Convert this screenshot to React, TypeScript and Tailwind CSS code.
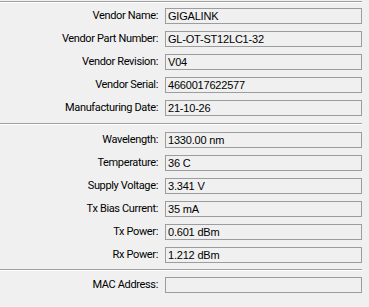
import React from "react";

const group1: [string, string][] = [
  ["Vendor Name:", "GIGALINK"],
  ["Vendor Part Number:", "GL-OT-ST12LC1-32"],
  ["Vendor Revision:", "V04"],
  ["Vendor Serial:", "4660017622577"],
  ["Manufacturing Date:", "21-10-26"],
];

const group2: [string, string][] = [
  ["Wavelength:", "1330.00 nm"],
  ["Temperature:", "36 C"],
  ["Supply Voltage:", "3.341 V"],
  ["Tx Bias Current:", "35 mA"],
  ["Tx Power:", "0.601 dBm"],
  ["Rx Power:", "1.212 dBm"],
];

function Row({ label, value }: { label: string; value: string }) {
  return (
    <div className="flex h-[16px] items-center">
      <div
        className="w-[162px] pr-[4px] text-right text-[11px] leading-[16px] tracking-[-0.35px] text-black"
        style={{ fontFamily: 'Roboto, "Liberation Sans", sans-serif' }}
      >
        {label}
      </div>
      <div className="ml-[3px] flex h-[16px] w-[197px] items-center border border-[#9c9c9c] bg-[#f0f0f0] pl-[2px] text-[11px] leading-[14px] tracking-[-0.2px] text-black">
        {value}
      </div>
    </div>
  );
}

function Sep() {
  return <div className="h-[2px] w-[362px] border-t border-[#a0a0a0] border-b border-b-white" />;
}

export default function App() {
  return (
    <div
      className="h-[307px] w-[369px] overflow-hidden bg-[#f0f0f0] pt-[1px] text-[11px]"
      style={{ fontFamily: '"Liberation Sans", Arial, sans-serif' }}
    >
      <Sep />
      <div className="flex flex-col gap-[7px] pt-[5px] pb-[7px]">
        {group1.map(([l, v]) => (
          <Row key={l} label={l} value={v} />
        ))}
      </div>
      <Sep />
      <div className="flex flex-col gap-[7px] pt-[7px] pb-[6px]">
        {group2.map(([l, v]) => (
          <Row key={l} label={l} value={v} />
        ))}
      </div>
      <Sep />
      <div className="flex flex-col pt-[6px]">
        <Row label="MAC Address:" value="" />
      </div>
    </div>
  );
}
